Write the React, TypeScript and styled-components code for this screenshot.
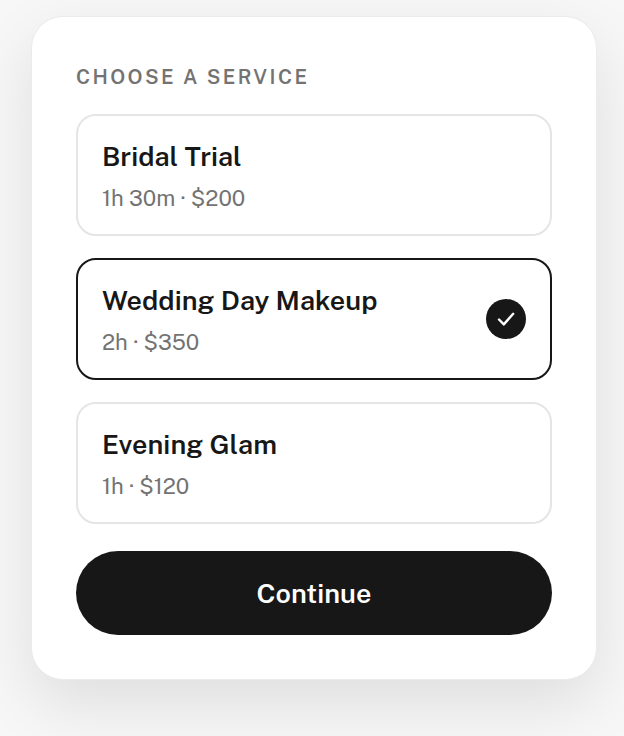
import React, { useState } from "react";
import styled, { createGlobalStyle } from "styled-components";

const GlobalStyle = createGlobalStyle`
  * { box-sizing: border-box; }
  body {
    margin: 0;
    background: #f7f7f7;
    font-family: "Public Sans", "Inter", "Liberation Sans", sans-serif;
    color: #171717;
  }
`;

const Page = styled.main`
  min-height: 100vh;
  padding: 16px 27px 56px 31px;
`;

const Card = styled.form`
  display: flex;
  flex-direction: column;
  padding: 44px;
  border: 1px solid #ebebeb;
  border-radius: 32px;
  background: #fff;
  box-shadow: 0 24px 64px rgba(0, 0, 0, 0.1);
`;

const Services = styled.fieldset`
  display: flex;
  flex-direction: column;
  gap: 22px;
  min-width: 0;
  margin: 0 0 27px;
  padding: 0;
  border: 0;
`;

const Heading = styled.legend`
  padding: 0;
  margin-bottom: 21px;
  color: #737373;
  font-size: 20px;
  line-height: 32px;
  font-weight: 600;
  letter-spacing: 0.12em;
  text-transform: uppercase;
`;

const Option = styled.label<{ $selected: boolean }>`
  display: flex;
  align-items: center;
  justify-content: space-between;
  gap: 16px;
  padding: 20px 24px;
  border: 2px solid ${(p) => (p.$selected ? "#171717" : "#e5e5e5")};
  border-radius: 20px;
  cursor: pointer;
`;

const Radio = styled.input`
  position: absolute;
  opacity: 0;
  pointer-events: none;
`;

const Text = styled.span`
  display: flex;
  flex-direction: column;
  gap: 6px;
`;

const Name = styled.span`
  font-size: 27px;
  line-height: 40px;
  font-weight: 600;
`;

const Detail = styled.span`
  color: #737373;
  font-size: 22px;
  line-height: 32px;
`;

const Tick = styled.span`
  display: grid;
  place-items: center;
  flex: none;
  width: 40px;
  height: 40px;
  border-radius: 50%;
  background: #171717;
`;

const Continue = styled.button`
  height: 84px;
  border: 0;
  border-radius: 42px;
  background: #171717;
  color: #fff;
  font: inherit;
  font-size: 27px;
  font-weight: 600;
  cursor: pointer;
`;

const services = [
  { name: "Bridal Trial", detail: "1h 30m · $200" },
  { name: "Wedding Day Makeup", detail: "2h · $350" },
  { name: "Evening Glam", detail: "1h · $120" },
];

export default function App() {
  const [selected, setSelected] = useState("Wedding Day Makeup");
  return (
    <Page>
      <GlobalStyle />
      <Card onSubmit={(e) => e.preventDefault()}>
        <Services>
          <Heading>Choose a service</Heading>
          {services.map(({ name, detail }) => (
            <Option key={name} $selected={name === selected}>
              <Radio
                type="radio"
                name="service"
                value={name}
                checked={name === selected}
                onChange={() => setSelected(name)}
              />
              <Text>
                <Name>{name}</Name>
                <Detail>{detail}</Detail>
              </Text>
              {name === selected && (
                <Tick>
                  <svg width="20" height="20" viewBox="0 0 20 20" fill="none" stroke="#fff" strokeWidth="2.4" strokeLinecap="round" strokeLinejoin="round" aria-hidden="true">
                    <path d="M3 10.5 7.8 15.4 17.2 4.8" />
                  </svg>
                </Tick>
              )}
            </Option>
          ))}
        </Services>
        <Continue type="submit">Continue</Continue>
      </Card>
    </Page>
  );
}
